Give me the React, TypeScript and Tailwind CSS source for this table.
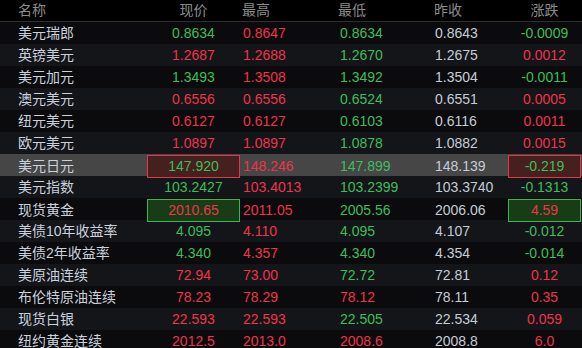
import React from 'react';

type Tone = 'up' | 'down' | 'flat';

interface Quote {
  name: string;
  last: [string, Tone];
  high: [string, Tone];
  low: [string, Tone];
  prev: string;
  change: [string, Tone];
  flash?: 'up' | 'down';
}

const rows: Quote[] = [
  { name: '美元瑞郎', last: ['0.8634', 'up'], high: ['0.8647', 'down'], low: ['0.8634', 'up'], prev: '0.8643', change: ['-0.0009', 'up'] },
  { name: '英镑美元', last: ['1.2687', 'down'], high: ['1.2688', 'down'], low: ['1.2670', 'up'], prev: '1.2675', change: ['0.0012', 'down'] },
  { name: '美元加元', last: ['1.3493', 'up'], high: ['1.3508', 'down'], low: ['1.3492', 'up'], prev: '1.3504', change: ['-0.0011', 'up'] },
  { name: '澳元美元', last: ['0.6556', 'down'], high: ['0.6556', 'down'], low: ['0.6524', 'up'], prev: '0.6551', change: ['0.0005', 'down'] },
  { name: '纽元美元', last: ['0.6127', 'down'], high: ['0.6127', 'down'], low: ['0.6103', 'up'], prev: '0.6116', change: ['0.0011', 'down'] },
  { name: '欧元美元', last: ['1.0897', 'down'], high: ['1.0897', 'down'], low: ['1.0878', 'up'], prev: '1.0882', change: ['0.0015', 'down'] },
  { name: '美元日元', last: ['147.920', 'up'], high: ['148.246', 'down'], low: ['147.899', 'up'], prev: '148.139', change: ['-0.219', 'up'], flash: 'down' },
  { name: '美元指数', last: ['103.2427', 'up'], high: ['103.4013', 'down'], low: ['103.2399', 'up'], prev: '103.3740', change: ['-0.1313', 'up'] },
  { name: '现货黄金', last: ['2010.65', 'down'], high: ['2011.05', 'down'], low: ['2005.56', 'up'], prev: '2006.06', change: ['4.59', 'down'], flash: 'up' },
  { name: '美债10年收益率', last: ['4.095', 'up'], high: ['4.110', 'down'], low: ['4.095', 'up'], prev: '4.107', change: ['-0.012', 'up'] },
  { name: '美债2年收益率', last: ['4.340', 'up'], high: ['4.357', 'down'], low: ['4.340', 'up'], prev: '4.354', change: ['-0.014', 'up'] },
  { name: '美原油连续', last: ['72.94', 'down'], high: ['73.00', 'down'], low: ['72.72', 'up'], prev: '72.81', change: ['0.12', 'down'] },
  { name: '布伦特原油连续', last: ['78.23', 'down'], high: ['78.29', 'down'], low: ['78.12', 'down'], prev: '78.11', change: ['0.35', 'down'] },
  { name: '现货白银', last: ['22.593', 'down'], high: ['22.593', 'down'], low: ['22.505', 'up'], prev: '22.534', change: ['0.059', 'down'] },
  { name: '纽约黄金连续', last: ['2012.5', 'down'], high: ['2013.0', 'down'], low: ['2008.6', 'down'], prev: '2008.8', change: ['6.0', 'down'] },
];

const toneClass = (t: Tone) =>
  t === 'up' ? 'text-[#3dbd5b]' : t === 'down' ? 'text-[#f0334b]' : 'text-[#c6ccd5]';

const grid = 'grid grid-cols-[146px_95px_95px_95px_76px_75px]';

const Flash: React.FC<{ kind?: 'up' | 'down'; children: React.ReactNode }> = ({ kind, children }) => {
  if (!kind) return <div className="flex items-center justify-center">{children}</div>;
  const box =
    kind === 'down'
      ? 'border-[#e8344b] bg-[#46201f]'
      : 'border-[#3cb554] bg-[#173c16]';
  return (
    <div className="flex items-stretch px-px py-px">
      <div className={`flex flex-1 items-center justify-center border ${box}`}>{children}</div>
    </div>
  );
};

export default function App() {
  return (
    <div
      className="h-[348px] w-[582px] overflow-hidden bg-[#0b0b0d] text-[14px]"
      style={{ fontFamily: '"Liberation Sans", "Noto Sans CJK SC", sans-serif' }}
    >
      <div className={`${grid} h-[22px] items-center border-b border-[#2e2e30] bg-black text-[#8c8c8c]`}>
        <div className="pl-[18px]">名称</div>
        <div className="text-center">现价</div>
        <div className="pl-[1px]">最高</div>
        <div className="pl-[2px]">最低</div>
        <div className="pl-[3px]">昨收</div>
        <div className="text-center">涨跌</div>
      </div>
      {rows.map((r, i) => {
        const bg = r.flash === 'down' ? 'bg-[#464646]' : i % 2 === 1 ? 'bg-[#141519]' : 'bg-[#0b0b0d]';
        return (
          <div key={r.name} className={`${grid} h-[22px] ${bg}`}>
            <div className="flex items-center pl-[18px] text-[#cad1dc]">{r.name}</div>
            <Flash kind={r.flash}>
              <span className={toneClass(r.last[1])}>{r.last[0]}</span>
            </Flash>
            <div className={`flex items-center pl-[2px] ${toneClass(r.high[1])}`}>{r.high[0]}</div>
            <div className={`flex items-center pl-[4px] ${toneClass(r.low[1])}`}>{r.low[0]}</div>
            <div className="flex items-center pl-[4px] text-[#c6ccd5]">{r.prev}</div>
            <Flash kind={r.flash}>
              <span className={toneClass(r.change[1])}>{r.change[0]}</span>
            </Flash>
          </div>
        );
      })}
    </div>
  );
}
